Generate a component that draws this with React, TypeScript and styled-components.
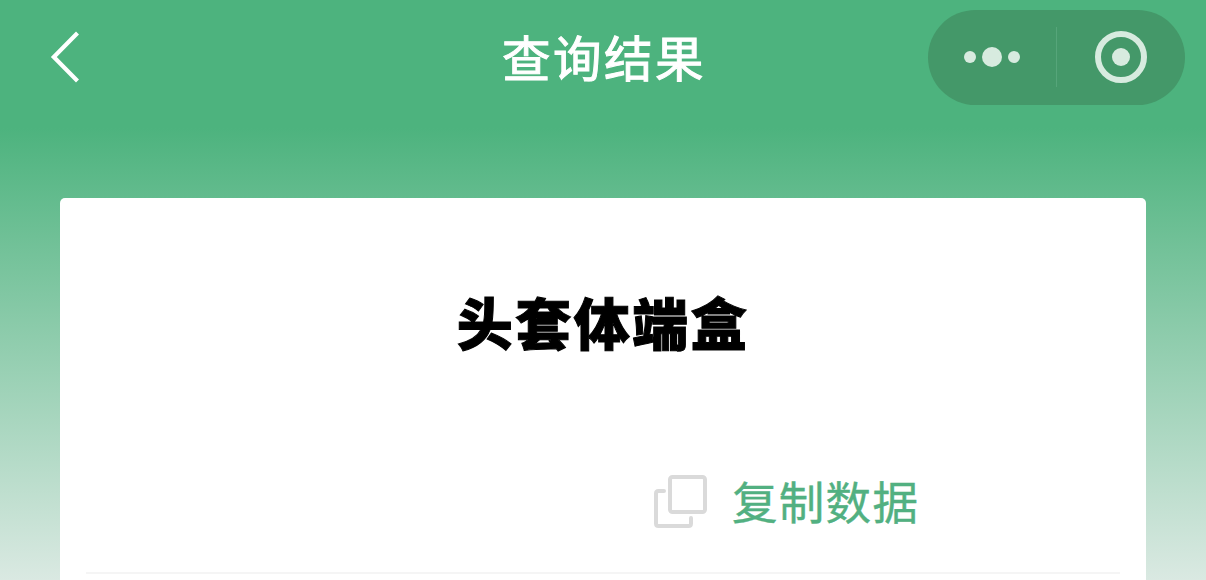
import React from "react";
import styled, { createGlobalStyle } from "styled-components";

const colors = {
  green: "#4db37e",
  capsule: "#449869",
  capsuleIcon: "#d7ebdf",
  copyText: "#52b081",
  copyIcon: "#dadada",
};

const App: React.FC<{}> = () => {
  return (
    <Wrapper>
      <GlobalStyle />
      <NavBar>
        <BackButton aria-label="返回">
          <svg width="32" height="56" viewBox="0 0 32 56" fill="none">
            <path d="M28.5 5L4.8 29L28.5 53" stroke="#fff" strokeWidth="4.2" />
          </svg>
        </BackButton>
        <Title>查询结果</Title>
        <Capsule>
          <CapsuleButton aria-label="更多">
            <Dot $size={12} />
            <Dot $size={20} />
            <Dot $size={12} />
          </CapsuleButton>
          <Divider />
          <CapsuleButton aria-label="关闭">
            <Ring>
              <Dot $size={18} />
            </Ring>
          </CapsuleButton>
        </Capsule>
      </NavBar>
      <Card>
        <ResultText>头套体端盒</ResultText>
        <CopyRow>
          <CopyButton>
            <svg width="54" height="54" viewBox="0 0 54 54" fill="none">
              <g stroke={colors.copyIcon} strokeWidth="4" strokeLinecap="round">
                <rect x="16" y="3" width="35" height="35" rx="2.5" />
                <path d="M10 17H4.5Q2 17 2 19.5V49.5Q2 52 4.5 52H34.5Q37 52 37 49.5V44" />
              </g>
            </svg>
            <CopyLabel>复制数据</CopyLabel>
          </CopyButton>
        </CopyRow>
      </Card>
    </Wrapper>
  );
};

const GlobalStyle = createGlobalStyle`
  body {
    margin: 0;
    font-family: "Noto Sans CJK SC", sans-serif;
  }

  button {
    appearance: none;
    border: none;
    padding: 0;
    background: none;
    font-family: inherit;
  }
`;

const Wrapper = styled.div`
  display: flex;
  flex-direction: column;
  height: 580px;
  overflow: hidden;
  background: linear-gradient(180deg, ${colors.green} 128px, #dae9e2 580px);
`;

const NavBar = styled.header`
  display: grid;
  grid-template-columns: 1fr auto 1fr;
  align-items: center;
  height: 94px;
  padding: 10px 21px 94px 49px;
`;

const BackButton = styled.button`
  width: 32px;
  height: 56px;
  margin-bottom: 3px;

  svg {
    display: block;
  }
`;

const Title = styled.h1`
  margin: 0 0 3px -26px;
  font-size: 48.5px;
  font-weight: 400;
  line-height: 72px;
  letter-spacing: 2.5px;
  color: #fff;
  -webkit-text-stroke: 1px #fff;
`;

const Capsule = styled.div`
  display: flex;
  align-items: center;
  justify-self: end;
  box-sizing: border-box;
  width: 257px;
  height: 95px;
  padding-bottom: 2px;
  border-radius: 48px;
  background: ${colors.capsule};
`;

const CapsuleButton = styled.button`
  display: flex;
  flex: 1;
  align-items: center;
  justify-content: center;
  gap: 6px;
`;

const Divider = styled.span`
  width: 1px;
  height: 60px;
  background: #56a57a;
`;

const Dot = styled.span<{ $size: number }>`
  width: ${({ $size }) => $size}px;
  height: ${({ $size }) => $size}px;
  border-radius: 50%;
  background: ${colors.capsuleIcon};
`;

const Ring = styled.span`
  display: flex;
  align-items: center;
  justify-content: center;
  box-sizing: border-box;
  width: 52px;
  height: 52px;
  border: 6px solid ${colors.capsuleIcon};
  border-radius: 50%;
`;

const Card = styled.main`
  flex: 1;
  margin: 0 60px;
  padding: 81px 26px 0;
  border-radius: 5px 5px 0 0;
  background: #fff;
`;

const ResultText = styled.h2`
  margin: 0;
  font-size: 56px;
  font-weight: 900;
  line-height: 84px;
  letter-spacing: 2.5px;
  text-align: center;
  color: #000;
  -webkit-text-stroke: 1px #000;
`;

const CopyRow = styled.div`
  display: flex;
  padding: 104px 0 37px 568px;
  border-bottom: 2px solid #f5f5f5;
`;

const CopyButton = styled.button`
  display: flex;
  align-items: center;
  gap: 24px;
  height: 68px;
`;

const CopyLabel = styled.span`
  margin-bottom: 2px;
  font-size: 45.5px;
  line-height: 68px;
  letter-spacing: 1.3px;
  color: ${colors.copyText};
  -webkit-text-stroke: 0.4px ${colors.copyText};
`;

export default App;
